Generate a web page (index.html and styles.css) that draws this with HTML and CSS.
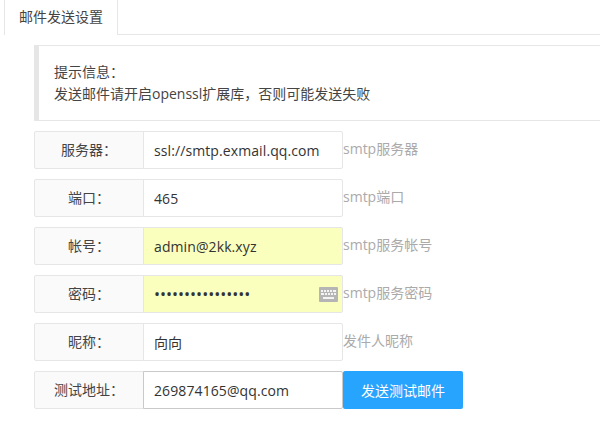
FILE: index.html
```html
<!DOCTYPE html>
<html lang="zh-CN">
<head>
    <meta charset="UTF-8">
    <meta name="viewport" content="width=device-width, initial-scale=1.0">
    <title>邮件发送设置</title>
    <link rel="stylesheet" href="styles.css">
</head>
<body>

    <div class="tab-title">
        <div class="tab-item">邮件发送设置</div>
    </div>

    <div class="content">
        <div class="note">
            <p>提示信息：</p>
            <p>发送邮件请开启openssl扩展库，否则可能发送失败</p>
        </div>

        <form class="mail-form">
            <div class="form-row">
                <label class="form-label">服务器：</label>
                <div class="input-wrap"><input class="form-input" type="text" value="ssl://smtp.exmail.qq.com"></div>
                <div class="form-tip">smtp服务器</div>
            </div>
            <div class="form-row">
                <label class="form-label">端口：</label>
                <div class="input-wrap"><input class="form-input" type="text" value="465"></div>
                <div class="form-tip">smtp端口</div>
            </div>
            <div class="form-row">
                <label class="form-label">帐号：</label>
                <div class="input-wrap"><input class="form-input autofill" type="text" value="admin@2kk.xyz"></div>
                <div class="form-tip">smtp服务帐号</div>
            </div>
            <div class="form-row">
                <label class="form-label">密码：</label>
                <div class="input-wrap">
                    <input class="form-input autofill password" type="password" value="aaaaaaaaaaaaaaaa">
                    <svg class="key-icon" width="19" height="15" viewBox="0 0 19 15">
                        <rect width="19" height="15" rx="1" fill="#b5b5b5"/>
                        <path d="M2 3h2v2H2zM5 3h2v2H5zM8 3h2v2H8zM11 3h2v2h-2zM14 3h3v2h-3zM2 6h3v2H2zM6 6h2v2H6zM9 6h2v2H9zM12 6h2v2h-2zM15 6h2v2h-2zM4 10h11v2H4z" fill="#f4f4f4"/>
                    </svg>
                </div>
                <div class="form-tip">smtp服务密码</div>
            </div>
            <div class="form-row">
                <label class="form-label">昵称：</label>
                <div class="input-wrap"><input class="form-input" type="text" value="向向"></div>
                <div class="form-tip">发件人昵称</div>
            </div>
            <div class="form-row">
                <label class="form-label">测试地址：</label>
                <div class="input-wrap"><input class="form-input focused" type="text" value="269874165@qq.com"></div>
                <button class="send-btn" type="button">发送测试邮件</button>
            </div>
        </form>
    </div>

</body>
</html>
```

FILE: styles.css
```css
* {
    margin: 0;
    padding: 0;
    box-sizing: border-box;
}

body {
    font-family: "Open Sans", "Noto Sans CJK SC", sans-serif;
    font-size: 14px;
    color: #444;
    background: #fff;
    overflow: hidden;
}

.tab-title {
    height: 35px;
    margin-left: 4px;
    border-bottom: 1px solid #e6e6e6;
}

.tab-item {
    width: 114px;
    height: 35px;
    line-height: 34px;
    text-align: center;
    background: #fff;
    border: 1px solid #e6e6e6;
    border-top: none;
    border-bottom: none;
}

.content {
    padding: 10px 0 0 34px;
}

.note {
    height: 76px;
    padding: 15px 15px;
    line-height: 22px;
    border: 1px solid #e6e6e6;
    border-left: 5px solid #e6e6e6;
    border-right: none;
    margin-bottom: 10px;
}

.form-row {
    display: flex;
    height: 38px;
    margin-bottom: 10px;
}

.form-label {
    width: 110px;
    line-height: 36px;
    text-align: center;
    background: #fafafa;
    border: 1px solid #e6e6e6;
    border-radius: 2px 0 0 2px;
}

.input-wrap {
    position: relative;
    width: 200px;
    margin-left: -1px;
}

.form-input {
    display: block;
    width: 100%;
    height: 38px;
    padding-left: 10px;
    font: inherit;
    letter-spacing: 0.1px;
    color: #333;
    background: #fff;
    border: 1px solid #e6e6e6;
    border-radius: 0 2px 2px 0;
    outline: none;
}

.autofill {
    background: #faffbd;
}

.password {
    font-size: 16px;
    letter-spacing: 0;
}

.focused {
    border-color: #c9c9c9;
}

.key-icon {
    position: absolute;
    top: 12px;
    right: 5px;
}

.form-tip {
    line-height: 36px;
    color: #aaa;
}

.send-btn {
    width: 120px;
    height: 38px;
    font: inherit;
    color: #fff;
    background: #27a4fe;
    border: none;
    border-radius: 2px;
}
```
